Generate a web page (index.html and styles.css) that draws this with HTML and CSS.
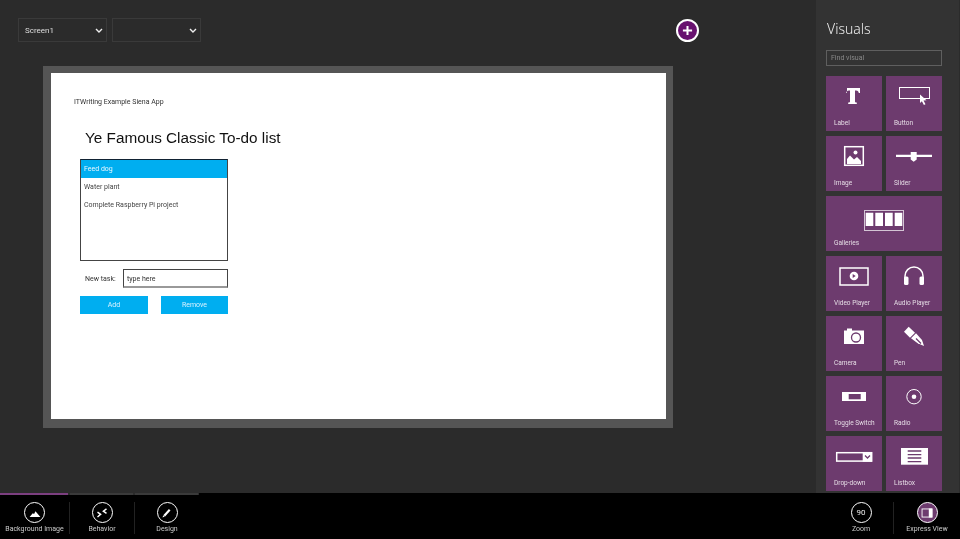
FILE: index.html
```html
<!doctype html>
<html lang="en">
<head>
  <meta charset="utf-8" />
  <title>Siena Designer</title>
  <link rel="stylesheet" href="styles.css">
</head>
<body>
  <div class="workspace">
    <main class="stage">
      <div class="toolbar">
        <div class="picker"><span>Screen1</span><svg class="chev" viewBox="0 0 8 5"><path d="M1 1l3 3 3-3"/></svg></div>
        <div class="picker"><span></span><svg class="chev" viewBox="0 0 8 5"><path d="M1 1l3 3 3-3"/></svg></div>
        <div class="add"><svg viewBox="0 0 12 12"><path d="M6 1v10M1 6h10"/></svg></div>
      </div>
      <div class="frame">
        <div class="canvas">
          <div class="app-name">ITWriting Example Siena App</div>
          <h1>Ye Famous Classic To-do list</h1>
          <div class="todo">
            <div class="todo-row selected">Feed dog</div>
            <div class="todo-row">Water plant</div>
            <div class="todo-row">Complete Raspberry Pi project</div>
          </div>
          <div class="new-task">
            <span>New task:</span>
            <div class="task-input">type here</div>
          </div>
          <div class="actions">
            <div class="action">Add</div>
            <div class="action">Remove</div>
          </div>
        </div>
      </div>
    </main>

    <aside class="visuals">
      <h2>Visuals</h2>
      <div class="find">Find visual</div>
      <div class="tiles">
        <div class="tile">
          <svg viewBox="0 0 56 40"><path class="fill" d="M21 12h13v5h-1.200c-.3-1.600-.8-2.500-2.800-2.500h-1v11c0 .8.4 1 1.800 1V28h-8.600v-1.500c1.400 0 1.800-.2 1.800-1v-11h-1c-2 0-2.500.9-2.800 2.500H21z"/></svg>
          <span>Label</span>
        </div>
        <div class="tile">
          <svg viewBox="0 0 56 40"><rect class="line" x="13.500" y="11.500" width="30" height="11"/><path class="fill" d="M34 18.500l6.500 5.800-3 .3 2 3.600-1.600.8-2-3.800-1.900 1.800z"/></svg>
          <span>Button</span>
        </div>
        <div class="tile">
          <svg viewBox="0 0 56 40"><rect class="line heavy" x="18.700" y="10.700" width="18.600" height="18.600"/><path class="fill" d="M21 28v-5l3-3.500 4 4 3-2.500 4 4v3z"/><circle class="fill" cx="29.500" cy="16.500" r="2"/></svg>
          <span>Image</span>
        </div>
        <div class="tile">
          <svg viewBox="0 0 56 40"><path class="fill" d="M10 18.700h36V21H10z"/><path class="fill" d="M24.700 16h6v7.500l-3 2.200-3-2.200z"/></svg>
          <span>Slider</span>
        </div>
        <div class="tile wide">
          <svg viewBox="0 0 116 40"><rect class="line thin" x="38.500" y="14.500" width="39" height="20"/><path class="fill" d="M39.700 16.700h7.600V30h-7.600zM49.300 16.700H57V30h-7.700zM59 16.700h7.700V30H59zM68.700 16.700h7.600V30h-7.600z"/></svg>
          <span>Galleries</span>
        </div>
        <div class="tile">
          <svg viewBox="0 0 56 40"><rect class="line heavy" x="14" y="12" width="28" height="17"/><circle class="fill" cx="28" cy="20" r="4.300"/><path class="ink" d="M26.700 18l3 2-3 2z"/></svg>
          <span>Video Player</span>
        </div>
        <div class="tile">
          <svg viewBox="0 0 56 40"><path class="line heavy" d="M19 25v-5a9 9 0 0 1 18 0v5"/><rect class="fill" x="18" y="20.500" width="4.500" height="8.500" rx="1.500"/><rect class="fill" x="33.500" y="20.500" width="4.500" height="8.500" rx="1.500"/></svg>
          <span>Audio Player</span>
        </div>
        <div class="tile">
          <svg viewBox="0 0 56 40"><path class="fill" d="M18 14.500h3v-2h5v2h12V28H18z"/><circle cx="30" cy="21.500" r="4.500" fill="none" stroke="#6d3b6e" stroke-width="1.300"/></svg>
          <span>Camera</span>
        </div>
        <div class="tile">
          <svg viewBox="0 0 56 40"><path class="fill" d="M18 15.700l4.700-5 6.300 6-5 5z"/><path class="fill" d="M25 22.300l5-5 6 6.700 2 6-6.300-2.700z"/><path class="ink-line" d="M30 22.500l5 5"/></svg>
          <span>Pen</span>
        </div>
        <div class="tile">
          <svg viewBox="0 0 56 40"><rect class="fill" x="16" y="16" width="24" height="9"/><rect class="ink" x="22.700" y="18" width="12" height="5.300"/></svg>
          <span>Toggle Switch</span>
        </div>
        <div class="tile">
          <svg viewBox="0 0 56 40"><circle class="line" cx="28" cy="20.700" r="7.200"/><circle class="fill" cx="28" cy="20.700" r="2.300"/></svg>
          <span>Radio</span>
        </div>
        <div class="tile">
          <svg viewBox="0 0 56 40"><rect class="line heavy" x="10.700" y="16.700" width="35" height="8.400"/><rect class="fill" x="36.700" y="16" width="9.300" height="9.700"/><path class="ink-line" d="M39 19.500l2.500 2.500 2.500-2.500"/></svg>
          <span>Drop-down</span>
        </div>
        <div class="tile">
          <svg viewBox="0 0 56 40"><rect class="fill" x="15" y="12" width="27" height="16.700"/><path class="ink-line" d="M21.700 15h13.600M21.700 18.700h13.600M21.700 22h13.600M21.700 25.700h13.600"/></svg>
          <span>Listbox</span>
        </div>
      </div>
    </aside>
  </div>

  <div class="appbar">
    <div class="tabs">
      <div class="tab active"></div>
      <div class="tab"></div>
      <div class="tab"></div>
    </div>
    <div class="commands">
      <div class="group">
        <div class="cmd">
          <div class="ring"><svg viewBox="0 0 20 20"><path class="fill" d="M4 14.500l3.500-4.300 1.500 1 1.500-3.200 5.500 6.500z"/></svg></div>
          <span>Background Image</span>
        </div>
        <div class="cmd">
          <div class="ring"><svg viewBox="0 0 20 20"><path class="line mid" d="M5 9l3.500 2.500-3.500 3M15 5.500l-3.500 2.500 3.500 2.500"/></svg></div>
          <span>Behavior</span>
        </div>
        <div class="cmd">
          <div class="ring"><svg viewBox="0 0 20 20"><path class="line wide-line" d="M7 13l6-6.500"/><path class="fill" d="M5 15l.8-2.600 1.800 1.600z"/></svg></div>
          <span>Design</span>
        </div>
      </div>
      <div class="group">
        <div class="cmd">
          <div class="ring zoom">90</div>
          <span>Zoom</span>
        </div>
        <div class="cmd">
          <div class="ring express"><svg viewBox="0 0 20 20"><rect class="line" x="4.500" y="5.500" width="11" height="9"/><rect class="fill" x="12" y="5" width="4" height="10"/></svg></div>
          <span>Express View</span>
        </div>
      </div>
    </div>
  </div>
</body>
</html>
```

FILE: styles.css
```css
:root{
  --bg:#2b2b2b; --side:#333; --tile:#6d3b6e; --purple:#68116f; --sky:#00aef0;
  font-family:Roboto,"Noto Sans",Arial,sans-serif;
}
html,body{margin:0;height:539px;overflow:hidden}
body{background:var(--bg);color:#fff;display:flex;flex-direction:column}
.fill{fill:#fff}
.line{fill:none;stroke:#fff;stroke-width:1}
.line.heavy{stroke-width:1.500}
.line.thin{stroke-opacity:.7}
.line.mid{stroke-width:1.600}
.line.wide-line{stroke-width:2.400}
.ink{fill:var(--tile)}
.ink-line{fill:none;stroke:var(--tile);stroke-width:1.300}

.workspace{display:flex;height:493px;will-change:transform}
.stage{width:816px;padding:18px 0 0 18px;box-sizing:border-box}

.toolbar{display:flex;gap:5px;height:24px;position:relative}
.picker{width:89px;height:24px;box-sizing:border-box;border:1px solid #3a3a3a;display:flex;align-items:center;justify-content:space-between;padding:1px 2px 0 6px;font-size:8px;color:#ddd}
.chev{width:8px;height:5px;margin-right:1px}
.chev path{fill:none;stroke:#eee;stroke-width:1.400}
.add{position:absolute;left:658px;top:1px;width:23px;height:23px;box-sizing:border-box;border:2px solid #fff;border-radius:50%;background:var(--purple);display:flex;align-items:center;justify-content:center}
.add svg{width:11px;height:11px}
.add path{stroke:#fff;stroke-width:2.200;fill:none}

.frame{width:630px;height:362px;margin:24px 0 0 25px;box-sizing:border-box;background:#555;padding:7px 7px 9px 8px}
.canvas{background:#fff;height:346px;color:#222;padding:24px 0 0 23px;box-sizing:border-box}
.app-name{font-size:7px;line-height:10px;color:#333}
h1{font:400 15.300px/20px "Liberation Sans",Arial,sans-serif;color:#111;margin:21px 0 0 11px}
.todo{width:148px;height:102px;box-sizing:border-box;border:1px solid #444;margin:11px 0 0 6px;font-size:7px;color:#444;border-top-color:#123}
.todo-row{height:18px;line-height:18px;padding-left:3px}
.selected{background:var(--sky);color:#e8f7ff}
.new-task{display:flex;align-items:center;margin:8px 0 0 11px;font-size:7px;height:19px;color:#333}
.new-task span{width:38px}
.task-input{width:105px;height:19px;box-sizing:border-box;border:1px solid #444;border-bottom:2px solid #999;padding-left:3px;line-height:18px}
.actions{display:flex;justify-content:space-between;width:148px;margin:8px 0 0 6px}
.action{width:67px;height:18px;background:var(--sky);color:#d8f2ff;font-size:7px;line-height:18px;text-align:center}
.action:first-child{width:68px}

.visuals{width:143px;height:495px;background:var(--side);padding:0 0 0 10px;box-sizing:border-box;overflow:hidden;margin-right:1px}
h2{font-family:"Noto Sans",sans-serif;font-size:14px;font-weight:300;line-height:20px;margin:19px 0 0 1px;color:#eee}
.find{width:116px;height:16px;box-sizing:border-box;border:1px solid #5f5f5f;margin-top:11px;padding-left:4px;font-size:7px;line-height:14px;color:#888}
.tiles{display:grid;grid-template-columns:56px 56px;grid-auto-rows:55px;column-gap:4px;row-gap:5px;margin-top:10px}
.tile{background:var(--tile);position:relative;overflow:hidden}
.tile.wide{grid-column:span 2}
.tile svg{display:block;width:100%;height:40px}
.tile span{position:absolute;left:8px;bottom:3px;font-size:6.500px;line-height:10px;color:#e4dbe4}

.appbar{background:#000;height:46px;flex:none;position:relative;z-index:1;will-change:transform}
.tabs{display:flex;gap:2px;height:2px;background:var(--bg);width:199px}
.tab{width:63px;background:#3a3a3a}
.tab.active{width:68px;background:#7c3f80}
.commands{display:flex;justify-content:space-between;height:44px}
.group{display:flex}
.cmd{width:64px;height:32px;margin-top:7px;display:flex;flex-direction:column;align-items:center;border-right:1px solid #222;font-size:7px;color:#ccc;position:relative}
.group:first-child .cmd:first-child{width:69px}
.cmd:last-child{border-right:none}
.group:last-child .cmd:last-child{width:66px}
.cmd span{position:absolute;top:22px;white-space:nowrap;line-height:10px}
.ring{width:21px;height:21px;box-sizing:border-box;border:1.500px solid #fff;border-radius:50%;display:flex;align-items:center;justify-content:center}
.ring svg{width:18px;height:18px}
.zoom{font-size:8px;color:#eee}
.express{background:#6d3b6e}
```
